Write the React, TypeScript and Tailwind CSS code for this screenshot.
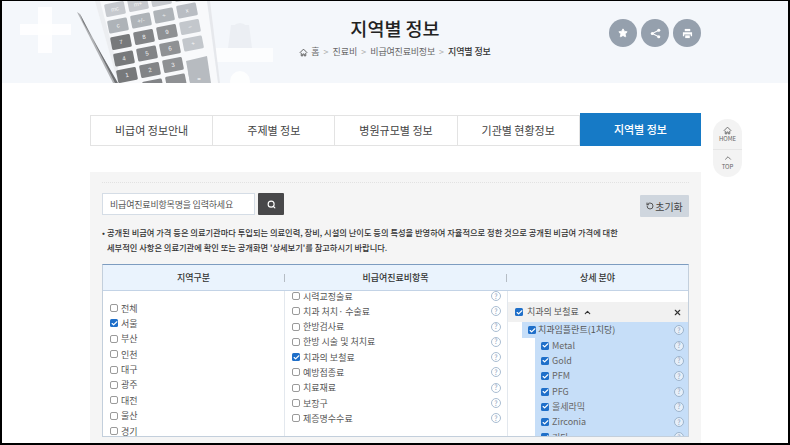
import { Star, Search, RotateCcw, ChevronUp, X, Check } from 'lucide-react'

const tabs = ['비급여 정보안내', '주제별 정보', '병원규모별 정보', '기관별 현황정보', '지역별 정보']
const regions = [
  ['전체', false],
  ['서울', true],
  ['부산', false],
  ['인천', false],
  ['대구', false],
  ['광주', false],
  ['대전', false],
  ['울산', false],
  ['경기', false],
] as const
const items = [
  ['시력교정술료', false],
  ['치과 처치· 수술료', false],
  ['한방검사료', false],
  ['한방 시술 및 처치료', false],
  ['치과의 보철료', true],
  ['예방접종료', false],
  ['치료재료', false],
  ['보장구', false],
  ['제증명수수료', false],
] as const
const details = ['Metal', 'Gold', 'PFM', 'PFG', '올세라믹', 'Zirconia', '기타']

function Box({ on }: { on: boolean }) {
  if (on) {
    return (
      <span className="w-[8px] h-[8px] shrink-0 rounded-[1.5px] bg-[#1f6fc9] flex items-center justify-center">
        <Check size={7} strokeWidth={4} className="text-white" />
      </span>
    )
  }
  return <span className="w-[8px] h-[8px] shrink-0 rounded-[2px] border border-[#9a9a9a] bg-white" />
}

function Help({ light }: { light?: boolean }) {
  return (
    <span className={`w-[10px] h-[10px] shrink-0 rounded-full border flex items-center justify-center text-[7px] leading-none ${light ? 'border-[#9db4cc] bg-[#e6eff9] text-[#8aa3bd]' : 'border-[#a9bdd2] text-[#86a0ba]'}`}>
      ?
    </span>
  )
}

function HomeGlyph({ size, className }: { size: number; className?: string }) {
  return (
    <svg viewBox="0 0 12 12" width={size} height={size} className={className} fill="none" stroke="currentColor" strokeWidth="1.2" aria-hidden="true">
      <path d="M1 6.5 L6 1.5 L11 6.5" />
      <path d="M3 6.5 V10.5 H5 V8 H7 V10.5 H9 V6.5" />
    </svg>
  )
}

const keyRows = [
  ['mc', 'm+', '', ''],
  ['c', '+/-', '÷', 'x'],
  ['7', '8', '9', '−'],
  ['4', '5', '6', '+'],
  ['1', '2', '3', ''],
  ['', '', '', ''],
]
const darkFills = ['#77797b', '#828487', '#8f9194']

function keyFill(r: number, c: number) {
  if (r === 0) return '#c6c9ce'
  if (r === 1) return c === 3 ? '#b9bdc3' : '#aeb3b8'
  if (c === 3) return '#c3c7cc'
  return darkFills[c]
}

function HeroArt() {
  return (
    <svg viewBox="0 0 280 82" className="absolute left-0 top-0 w-[280px] h-[82px]" aria-hidden="true">
      <rect x="36" y="6" width="14" height="46" fill="#fff" opacity="0.85" />
      <rect x="18" y="23" width="51" height="11" fill="#fff" opacity="0.85" />
      <rect x="213" y="47" width="58" height="14" fill="#fff" opacity="0.7" />
      <circle cx="238" cy="31" r="9" fill="#eceff4" />
      <path d="M226 47 L229 24 L247 24 L250 47 Z" fill="#eceff4" />
      <circle cx="238" cy="80" r="10" fill="#fff" opacity="0.8" />
      <path d="M93 0 L205 0 L216 82 L116 82 Z" fill="#f8f9fb" />
      <path d="M93 0 L98 0 L120 82 L116 82 Z" fill="#eceef1" />
      <path d="M205 0 L208 0 L218 82 L216 82 Z" fill="#e6e8ec" />
      {keyRows.map((row, r) =>
        row.map((k, c) => {
          if (r === 4 && c === 3) return null
          const cx = 113 + 23 * c + 3 * r
          const cy = 8 + 16.5 * r - 5 * c
          return (
            <g key={`${r}-${c}`} transform={`rotate(-11 ${cx} ${cy})`}>
              <rect x={cx - 10} y={cy - 6.5} width="20" height="13" rx="1.5" fill={keyFill(r, c)} />
              {k && (
                <text x={cx} y={cy + 2} fontSize="6" fill="#f4f4f4" textAnchor="middle" fontFamily="Liberation Sans, sans-serif">{k}</text>
              )}
            </g>
          )
        })
      )}
      <path d="M184 60 L205 55 L209 82 L188 82 Z" fill="#b7bbc0" />
      <text x="197" y="80" fontSize="6" fill="#fff" textAnchor="middle" fontFamily="Liberation Sans, sans-serif">=</text>
      <path d="M75 11 L78 13 L115 82 L111 82 Z" fill="#b1b3b6" />
      <path d="M78 13 L81 21 L116 82 L113 82 Z" fill="#6f7174" />
    </svg>
  )
}

export default function App() {
  return (
    <div className="w-[790px] h-[445px] overflow-hidden border-t border-l-2 border-r-2 border-b-2 border-black bg-white relative font-['Noto_Sans_CJK_KR','Noto_Sans',sans-serif]">
      <div className="relative h-[82px] bg-[#f4f7fb] overflow-hidden flex flex-col items-center pt-[14px]">
        <HeroArt />
        <h1 className="relative text-[18.5px] leading-[26px] font-medium text-[#222]">지역별 정보</h1>
        <div className="relative mt-[5px] flex items-center gap-[3px] text-[9px] leading-[12px] text-[#666]">
          <HomeGlyph size={9} className="text-[#555]" />
          <span>홈</span>
          <span className="text-[#aaa] mx-[1px]">&gt;</span>
          <span>진료비</span>
          <span className="text-[#aaa] mx-[1px]">&gt;</span>
          <span className="tracking-[-0.2px]">비급여진료비정보</span>
          <span className="text-[#aaa] mx-[1px]">&gt;</span>
          <span className="font-medium text-[#333] tracking-[-0.1px]">지역별 정보</span>
        </div>
        <div className="absolute left-[607px] top-[18px] flex gap-[4px]">
          <span className="w-[28px] h-[28px] rounded-full bg-[#95a0ad] flex items-center justify-center">
            <Star size={10} className="text-white fill-white" />
          </span>
          <span className="w-[28px] h-[28px] rounded-full bg-[#95a0ad] flex items-center justify-center">
            <svg viewBox="0 0 12 12" width="11" height="11" fill="#fff" stroke="#fff" aria-hidden="true">
              <path d="M9.5 2.5 L2.5 6 L9.5 9.5" fill="none" strokeWidth="1.1" />
              <circle cx="9.5" cy="2.5" r="1.7" stroke="none" />
              <circle cx="2.5" cy="6" r="1.7" stroke="none" />
              <circle cx="9.5" cy="9.5" r="1.7" stroke="none" />
            </svg>
          </span>
          <span className="w-[28px] h-[28px] rounded-full bg-[#95a0ad] flex items-center justify-center">
            <svg viewBox="0 0 12 12" width="11" height="11" fill="#fff" aria-hidden="true">
              <path d="M3 1 H9 V3.5 H3 Z" />
              <path d="M1 4.5 H11 V9 H9.5 V7 H2.5 V9 H1 Z" />
              <path d="M3.5 8 H8.5 V11 H3.5 Z" />
            </svg>
          </span>
        </div>
      </div>

      <div className="ml-[88px] w-[611px] mt-[32px]">
        <div className="flex h-[31px] items-stretch">
          {tabs.map((t, i) =>
            i === 4 ? (
              <div key={t} className="flex-1 -mt-[2px] h-[33px] bg-[#167ac6] text-white text-[11px] font-medium flex items-center justify-center">
                {t}
              </div>
            ) : (
              <div key={t} className={`flex-1 border-y border-r border-[#e3e3e3] text-[#444] text-[11px] flex items-center justify-center ${i === 0 ? 'border-l' : ''}`}>
                {t}
              </div>
            )
          )}
        </div>

        <div className="mt-[26px] bg-[#f5f5f5] h-[280px] px-[12px] pt-[10px]">
          <div className="border-t border-dotted border-[#e2e2e2]" />
          <div className="mt-[10px] flex justify-between">
            <div className="flex gap-[3px]">
              <div className="w-[153px] h-[22px] bg-white border border-[#d5dde6] pl-[7px] pt-[1px] flex items-center text-[9px] tracking-[-0.2px] text-[#555]">
                비급여진료비항목명을 입력하세요
              </div>
              <button className="w-[26px] h-[22px] bg-[#48484a] rounded-[1px] flex items-center justify-center">
                <Search size={9} strokeWidth={3} className="text-white" />
              </button>
            </div>
            <button className="mt-[2px] w-[49px] h-[22px] bg-[#cfd6de] rounded-[1px] flex items-center justify-center gap-[1px] text-[10px] text-[#444]">
              <RotateCcw size={8} strokeWidth={3} className="text-[#555]" />
              초기화
            </button>
          </div>
          <p className="mt-[8px] text-[8.25px] leading-[15px] font-medium text-[#333] whitespace-nowrap">
            <span className="inline-block w-[5px]">•</span>공개된 비급여 가격 등은 의료기관마다 투입되는 의료인력, 장비, 시설의 난이도 등의 특성을 반영하여 자율적으로 정한 것으로 공개된 비급여 가격에 대한
            <br />
            <span className="ml-[5px]">세부적인 사항은 의료기관에 확인 또는 공개화면 '상세보기'를 참고하시기 바랍니다.</span>
          </p>

          <div className="mt-[9px] h-[173px] bg-white border border-[#c3cfdc] border-t-[#7d9cc0] overflow-hidden">
            <div className="grid grid-cols-[181px_223px_181px] h-[26px] pt-[1px] bg-[#eaf3fd] border-b border-[#c3d3e6] text-[9px] font-medium text-[#333]">
              <div className="flex items-center justify-center">지역구분</div>
              <div className="relative flex items-center justify-center">
                <span className="absolute left-0 top-[8px] h-[8px] w-px bg-[#b5bcc4]" />
                비급여진료비항목
                <span className="absolute right-0 top-[8px] h-[8px] w-px bg-[#b5bcc4]" />
              </div>
              <div className="flex items-center justify-center">상세 분야</div>
            </div>
            <div className="grid grid-cols-[181px_223px_181px] h-[146px] overflow-hidden">
              <div className="pl-[7px] pt-[12px] flex flex-col gap-[5.4px]">
                {regions.map(([n, on]) => (
                  <div key={n} className="h-[10px] flex items-center gap-[3px] text-[9px] leading-none text-[#555]">
                    <Box on={on} />
                    {n}
                  </div>
                ))}
              </div>
              <div className="border-l border-[#e3e8ee] pl-[7px] pr-[6px] flex flex-col gap-[5.3px]">
                {items.map(([n, on]) => (
                  <div key={n} className="h-[10px] flex items-center gap-[3px] text-[9px] leading-none text-[#555]">
                    <Box on={on} />
                    <span className="flex-1">{n}</span>
                    <Help />
                  </div>
                ))}
              </div>
              <div className="border-l border-[#e3e8ee] pt-[11px] overflow-hidden">
                <div className="h-[20px] bg-[#f1f1f1] pl-[7px] pr-[6px] flex items-center gap-[4px] text-[9px] text-[#555]">
                  <Box on />
                  치과의 보철료
                  <ChevronUp size={9} strokeWidth={3} className="text-[#333]" />
                  <X size={9} strokeWidth={3} className="ml-auto text-[#333]" />
                </div>
                <div className="ml-[14px] h-[16px] bg-[#c6def8] pl-[6px] pr-[4px] flex items-center gap-[2px] text-[9px] text-[#555]">
                  <Box on />
                  <span className="flex-1">치과임플란트(1치당)</span>
                  <Help light />
                </div>
                <div className="ml-[27px] bg-[#c6def8] pl-[6px] pr-[4px]">
                  {details.map(d => (
                    <div key={d} className="h-[15.3px] flex items-center gap-[3px] text-[9px] text-[#666]">
                      <Box on />
                      <span className="flex-1">{d}</span>
                      <Help light />
                    </div>
                  ))}
                </div>
              </div>
            </div>
          </div>
        </div>
      </div>

      <div className="absolute left-[711px] top-[118px] w-[29px] h-[58px] rounded-full bg-[#f3f3f3] flex flex-col items-center text-[6px] leading-[7px] text-[#666]">
        <HomeGlyph size={9} className="mt-[7px]" />
        <span>HOME</span>
        <span className="mt-[7px] w-full border-t border-[#e6e6e6]" />
        <ChevronUp size={10} className="mt-[3px]" />
        <span>TOP</span>
      </div>
    </div>
  )
}
